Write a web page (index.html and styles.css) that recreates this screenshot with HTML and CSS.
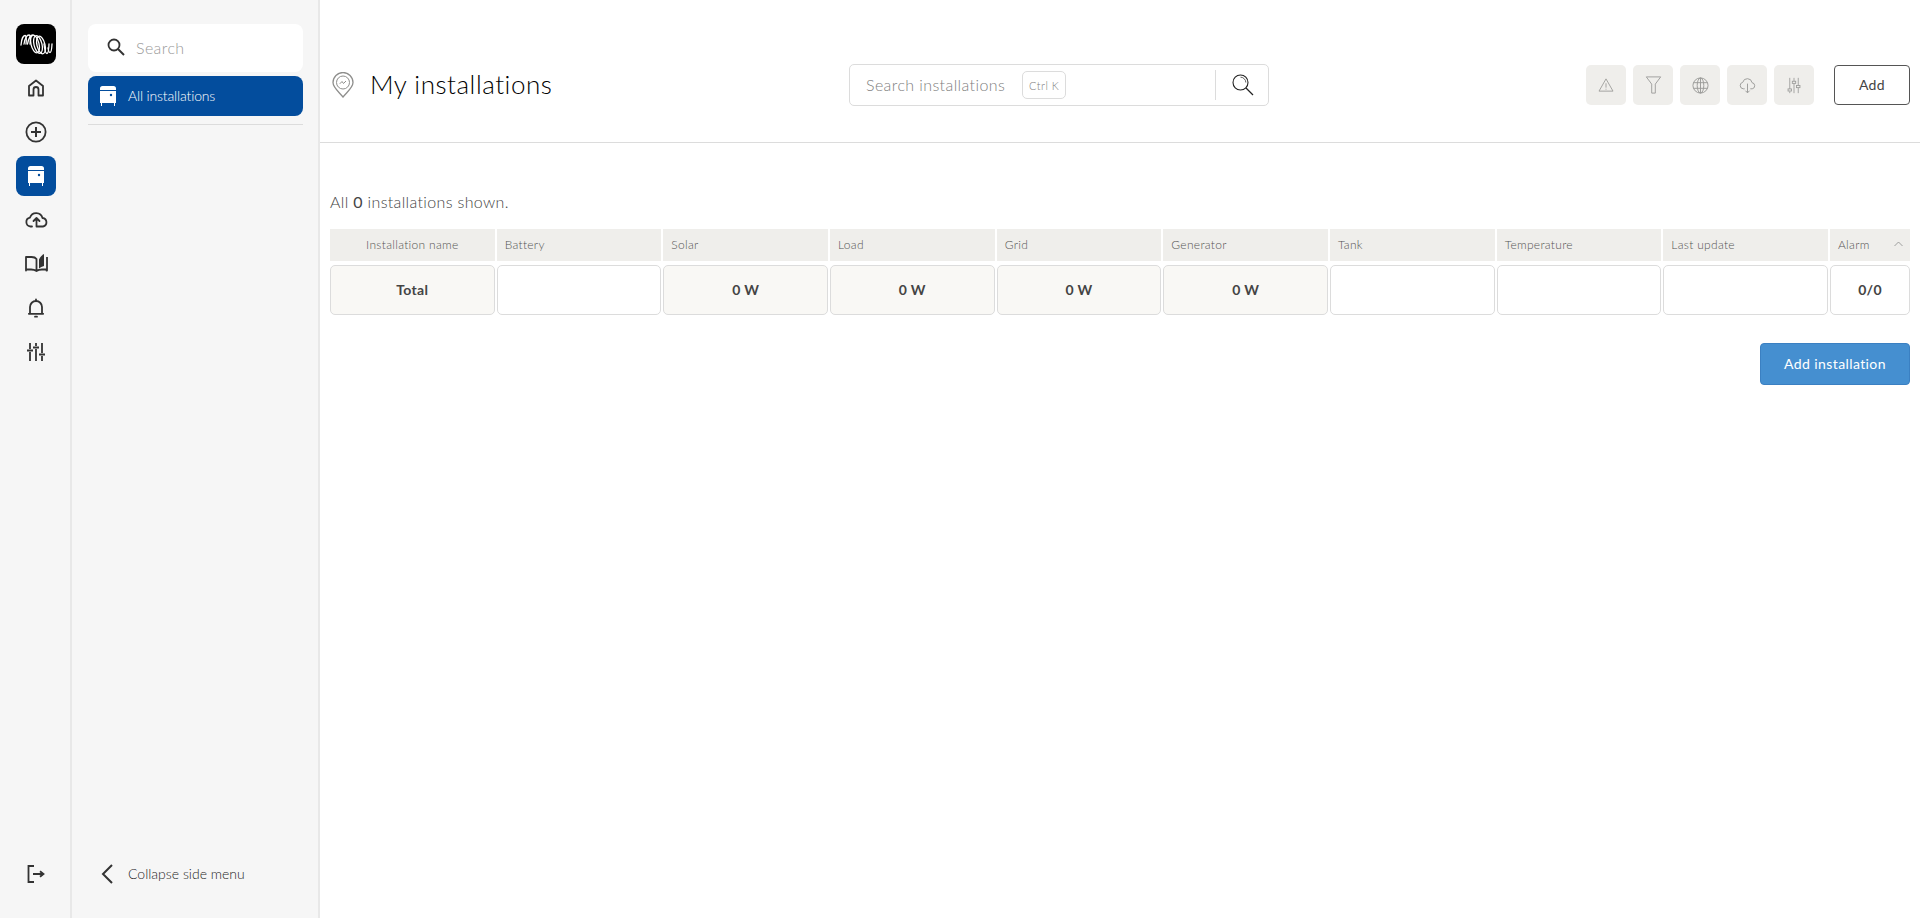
FILE: index.html
```html
<!DOCTYPE html>
<html lang="en">
<head>
<meta charset="utf-8">
<title>My installations</title>
<link rel="stylesheet" href="styles.css">
</head>
<body>
<div class="app">
  <nav class="rail">
    <div class="rail-top">
      <div class="logo">
        <svg width="33" height="21" viewBox="0 0 33 21" fill="none" stroke="#fff" stroke-width="1.300" stroke-linecap="round">
          <path d="M1 11C1.500 5 3.500 1.500 5 1.500S6.500 6 6 10"/>
          <path d="M4 10C5 4.500 7 1 9 1S10.500 5 10 10"/>
          <path d="M7.500 10C8.500 4 11 .8 13 .8"/>
          <ellipse cx="15" cy="10" rx="4" ry="9" transform="rotate(-14 15 10)"/>
          <ellipse cx="18" cy="10.500" rx="4" ry="9" transform="rotate(-14 18 10.500)"/>
          <ellipse cx="21" cy="11" rx="4" ry="9" transform="rotate(-14 21 11)"/>
          <path d="M24 10C24.500 15 25.500 19.500 27 19.500S28.800 15 29 10"/>
          <path d="M28 14C28.500 17 29 18.500 30 18.500S31.800 14 32 10"/>
        </svg>
      </div>
      <a class="rail-btn">
        <svg width="20" height="20" viewBox="0 0 20 20" fill="none" stroke="#333" stroke-width="1.800" stroke-linejoin="round"><path d="M3 17.500V8L10 2.500 17 8V17.500H12.500V11.500A2.500 2.500 0 0 0 7.500 11.500V17.500Z"/></svg>
      </a>
      <a class="rail-btn">
        <svg width="22" height="22" viewBox="0 0 22 22" fill="none" stroke="#333" stroke-width="1.800"><circle cx="11" cy="11" r="9.600"/><path d="M11 6V16M6 11H16" stroke-width="2"/></svg>
      </a>
      <a class="rail-btn rail-btn-active">
        <svg width="16" height="20" viewBox="0 0 16 20"><path fill="#fff" d="M2.500 0H13.500A2.500 2.500 0 0 1 16 2.500V4H0V2.500A2.500 2.500 0 0 1 2.500 0ZM0 5H16V17H15V20H14V17H2V20H1V17H0Z"/><circle cx="11" cy="9" r="1.200" fill="#034d9d"/></svg>
      </a>
      <a class="rail-btn">
        <svg width="23" height="18" viewBox="0 1 23 18" fill="none" stroke="#333" stroke-width="1.800" stroke-linecap="round" stroke-linejoin="round"><path d="M7 16.500H5.500A4.500 4.500 0 0 1 5 7.600 6.500 6.500 0 0 1 17.500 8 4.300 4.300 0 0 1 18 16.500H11.500V8.500M8.500 11L11.500 8 14.500 11"/></svg>
      </a>
      <a class="rail-btn">
        <svg width="23" height="20" viewBox="0 1 23 20" fill="none" stroke="#333" stroke-width="1.800" stroke-linejoin="round"><path d="M1 17.500V4H6.500C9 4 10.500 4.500 11.500 6V18C10 17 8 16.500 6 16.500H1V17.500ZM22 4V17.500H21.500V16.500H17C15 16.500 13 17 11.500 18"/><path fill="#333" stroke="none" d="M14 15.500V6.500C15 4 17 2 19 1V13C17 13.500 15.500 14.500 14 15.500Z"/></svg>
      </a>
      <a class="rail-btn">
        <svg width="16" height="20" viewBox="0 0 16 20" fill="none" stroke="#333" stroke-width="1.800" stroke-linecap="round"><path d="M2 15.500V9A6 6 0 0 1 14 9V15.500M0.800 15.800H15.200"/><path d="M8 1.500V2.500M7 18.700H9"/></svg>
      </a>
      <a class="rail-btn">
        <svg width="18" height="18" viewBox="0 0 18 18" fill="none" stroke="#333" stroke-width="1.800"><path d="M3 0V6M3 9V18M9 0V3M9 6V18M15 0V10M15 13V18M0 7.500H6M6 4.500H12M12 11.500H18"/></svg>
      </a>
    </div>
    <a class="rail-btn">
      <svg width="18" height="18" viewBox="0 0 18 18" fill="none" stroke="#333" stroke-width="1.800"><path d="M7 1H1.500V17H7M6 9H16M13 6.200L16.500 9 13 11.800"/></svg>
    </a>
  </nav>

  <aside class="side">
    <div class="side-top">
      <div class="side-search">
        <svg width="18" height="18" viewBox="0 0 18 18" fill="none" stroke="#333" stroke-width="1.800"><circle cx="7" cy="7" r="5.500"/><path d="M11 11L17 17" stroke-width="2"/></svg>
        <span class="side-search-text">Search</span>
      </div>
      <a class="side-item">
        <svg width="16" height="20" viewBox="0 0 16 20"><path fill="#fff" d="M2.500 0H13.500A2.500 2.500 0 0 1 16 2.500V4H0V2.500A2.500 2.500 0 0 1 2.500 0ZM0 5H16V17H15V20H14V17H2V20H1V17H0Z"/><circle cx="11" cy="9" r="1.200" fill="#034d9d"/></svg>
        <span>All installations</span>
      </a>
      <div class="side-rule"></div>
    </div>
    <a class="collapse">
      <svg width="12" height="20" viewBox="0 0 12 20" fill="none" stroke="#333" stroke-width="2"><path d="M11 1L2 10L11 19"/></svg>
      <span>Collapse side menu</span>
    </a>
  </aside>

  <main class="main">
    <header class="head">
      <div class="title-wrap">
        <svg width="22" height="26" viewBox="0 0 22 26" fill="none" stroke="#8e8e8c" stroke-width="1.300"><path d="M11 25C7 20 1 15.500 1 10.500A10 10 0 0 1 21 10.500C21 15.500 15 20 11 25Z"/><circle cx="11" cy="10.500" r="6.500" stroke-width="1"/><path d="M7.800 11.800L10 9.500 11.500 11.500 14 9" stroke-width="1"/></svg>
        <h1 class="title">My installations</h1>
      </div>
      <div class="search">
        <span class="search-text">Search installations</span>
        <span class="kbd">Ctrl K</span>
        <span class="search-sep"></span>
        <svg class="search-icon" width="22" height="22" viewBox="0 0 22 22" fill="none" stroke="#222" stroke-width="1.100"><circle cx="8.500" cy="8.500" r="7.500"/><path d="M14 14L21 21" stroke-width="1.300"/><path d="M8.500 3.200A5.300 5.300 0 0 1 13.800 8.500" stroke-width=".7"/></svg>
      </div>
      <div class="tools">
        <a class="tool"><svg width="16" height="14" viewBox="0 0 18 16" fill="none" stroke="#9a9a98" stroke-width="1"><path d="M9 1L17 15H1ZM9 6V11M9 12.300V13.300"/></svg></a>
        <a class="tool"><svg width="17" height="18" viewBox="0 0 18 20" fill="none" stroke="#9a9a98" stroke-width="1"><path d="M1 1H17L11 9V19H7V9Z"/></svg></a>
        <a class="tool"><svg width="17" height="17" viewBox="0 0 18 18" fill="none" stroke="#9a9a98" stroke-width="1"><circle cx="9" cy="9" r="8"/><ellipse cx="9" cy="9" rx="3.500" ry="8"/><path d="M9 1V17M1.500 6H16.500M1.500 12H16.500"/></svg></a>
        <a class="tool"><svg width="17" height="17" viewBox="0 0 18 18" fill="none" stroke="#9a9a98" stroke-width="1"><path d="M6 12.500H4.500A3.500 3.500 0 0 1 4 5.600 5 5 0 0 1 13.800 6 3.300 3.300 0 0 1 14 12.500H12M9 7V16.500M6.800 14.500L9 16.800 11.200 14.500"/></svg></a>
        <a class="tool"><svg width="16" height="17" viewBox="0 0 16 20" fill="none" stroke="#9a9a98" stroke-width="1"><path d="M3 1V14M3 17V19M8 1V5M8 8V19M13 1V10M13 13V19"/><rect x="1" y="14" width="4" height="2.500"/><rect x="6" y="5" width="4" height="2.500"/><rect x="11" y="10" width="4" height="2.500"/></svg></a>
        <a class="add-btn">Add</a>
      </div>
    </header>

    <section class="content">
      <p class="count">All <b>0</b> installations shown.</p>
      <div class="grid">
        <div class="th th-center">Installation name</div>
        <div class="th">Battery</div>
        <div class="th">Solar</div>
        <div class="th">Load</div>
        <div class="th">Grid</div>
        <div class="th">Generator</div>
        <div class="th">Tank</div>
        <div class="th">Temperature</div>
        <div class="th">Last update</div>
        <div class="th th-alarm">Alarm<svg width="9" height="6" viewBox="0 0 9 6" fill="none" stroke="#8c8c8a" stroke-width=".8"><path d="M.5 5L4.500 1 8.500 5"/></svg></div>
        <div class="td td-shade">Total</div>
        <div class="td"></div>
        <div class="td td-shade">0 W</div>
        <div class="td td-shade">0 W</div>
        <div class="td td-shade">0 W</div>
        <div class="td td-shade">0 W</div>
        <div class="td"></div>
        <div class="td"></div>
        <div class="td"></div>
        <div class="td">0/0</div>
      </div>
      <div class="actions">
        <a class="primary">Add installation</a>
      </div>
    </section>
  </main>
</div>
</body>
</html>
```
FILE: styles.css
```css
* { box-sizing: border-box; }
html, body { margin: 0; height: 100%; }
body {
  font-family: "Lato", "Open Sans", "Liberation Sans", sans-serif;
  font-weight: 300;
  color: #333;
  background: #fff;
  overflow: hidden;
}
a { display: flex; color: inherit; text-decoration: none; }
.app { display: flex; height: 918px; }

.rail {
  width: 72px;
  flex: none;
  background: #f6f6f6;
  border-right: 2px solid #e8e8e8;
  padding: 24px 0 24px 16px;
  display: flex;
  flex-direction: column;
  justify-content: space-between;
}
.rail-top { display: flex; flex-direction: column; gap: 4px; }
.logo {
  width: 40px; height: 40px;
  background: #000;
  border-radius: 8px;
  display: flex; align-items: center; justify-content: center;
}
.rail-btn {
  width: 40px; height: 40px;
  border-radius: 8px;
  align-items: center; justify-content: center;
}
.rail-btn-active { background: #034d9d; }

.side {
  width: 248px;
  flex: none;
  background: #f6f6f6;
  border-right: 2px solid #e8e8e8;
  padding: 24px 15px 24px 16px;
  display: flex;
  flex-direction: column;
  justify-content: space-between;
}
.side-top { display: flex; flex-direction: column; }
.side-search {
  height: 48px;
  background: #fff;
  border-radius: 8px;
  display: flex; align-items: center;
  padding: 0 0 2px 19px;
  gap: 11px;
}
.side-search-text { font-size: 16px; color: #999; letter-spacing: .4px; }
.side-item {
  margin-top: 4px;
  height: 40px;
  background: #034d9d;
  border-radius: 8px;
  align-items: center;
  padding-left: 12px;
  gap: 12px;
  color: #fff;
  font-size: 14px;
  letter-spacing: -.15px;
}
.side-item span { padding-bottom: 2px; }
.side-rule { height: 1px; background: #dcdcdc; margin-top: 8px; }
.collapse {
  height: 40px;
  align-items: center;
  padding-left: 13px;
  gap: 15px;
  font-size: 14px;
  color: #1f1f1f;
}
.collapse span { padding-bottom: 2px; }

.main { flex: 1; min-width: 0; }
.head {
  height: 143px;
  border-bottom: 1px solid #dcdcdc;
  display: flex;
  align-items: center;
  padding: 28px 10px 0 10px;
}
.title-wrap { display: flex; align-items: center; gap: 16px; width: 519px; padding-left: 2px; }
.title { margin: 0 0 2px; font-size: 26px; font-weight: 300; color: #000; letter-spacing: .53px; line-height: 30px; }
.search {
  width: 420px;
  height: 42px;
  border: 1px solid #dcdcdc;
  border-radius: 5px;
  display: flex;
  align-items: center;
  padding-left: 16px;
}
.search-text { font-size: 16px; color: #808080; letter-spacing: .4px; padding-bottom: 1px; }
.kbd {
  margin-left: 17px;
  width: 44px; height: 28px;
  border: 1px solid #dcdcdc;
  border-radius: 5px;
  font-size: 11px;
  letter-spacing: .5px;
  color: #808080;
  display: flex; align-items: center; justify-content: center;
}
.search-sep { width: 1px; height: 30px; background: #dcdcdc; margin-left: auto; }
.search-icon { margin: 0 14px 0 16px; }
.tools { margin-left: auto; display: flex; align-items: center; gap: 7px; }
.tool {
  width: 40px; height: 40px;
  border-radius: 5px;
  background: #efeeeb;
  align-items: center; justify-content: center;
}
.add-btn {
  margin-left: 13px;
  width: 76px; height: 40px;
  border: 1px solid #555;
  border-radius: 4px;
  align-items: center; justify-content: center;
  font-size: 14px;
  font-weight: 400;
  letter-spacing: .4px;
  color: #444;
  padding-bottom: 1px;
}

.content { padding: 49px 10px 0 10px; }
.count { margin: 0; font-size: 16px; line-height: 20px; color: #444; letter-spacing: .35px; }
.count b { font-weight: 400; }
.grid {
  margin-top: 17px;
  display: grid;
  grid-template-columns: repeat(9, 1fr) 80px;
  grid-template-rows: 32px 50px;
  gap: 4px 2px;
}
.th {
  background: #efeeeb;
  display: flex; align-items: center;
  padding: 0 0 2px 8px;
  font-size: 12px;
  font-weight: 300;
  letter-spacing: .3px;
  color: #555;
}
.th-center { justify-content: center; padding-left: 0; }
.th-alarm { justify-content: space-between; padding-right: 7px; }
.td {
  border: 1px solid #dcdcdc;
  border-radius: 5px;
  display: flex; align-items: center; justify-content: center;
  font-size: 14px;
  font-weight: 700;
  letter-spacing: .3px;
  color: #444;
  padding-bottom: 1px;
}
.td-shade { background: #f9f8f5; }
.actions { display: flex; justify-content: flex-end; margin-top: 28px; }
.primary {
  width: 150px; height: 42px;
  background: #458fd0;
  border: 1px solid #3b80c2;
  border-radius: 4px;
  color: #fff;
  font-size: 14px;
  font-weight: 400;
  letter-spacing: .4px;
  align-items: center; justify-content: center;
  padding-bottom: 1px;
}
```
